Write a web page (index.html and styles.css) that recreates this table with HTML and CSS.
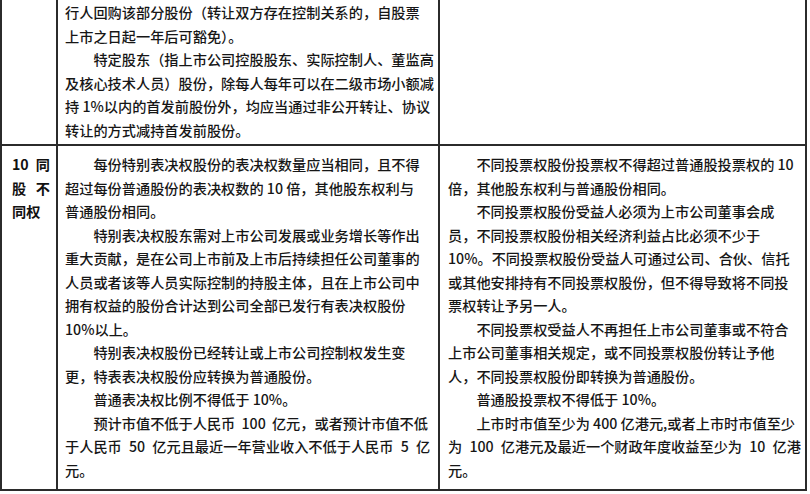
FILE: index.html
```html
<!DOCTYPE html>
<html lang="zh-CN">
<head>
<meta charset="utf-8">
<title>同股不同权</title>
<link rel="stylesheet" href="styles.css">
</head>
<body>
<div class="grid">
  <div class="cell head top"></div>
  <div class="cell text top">
    <p class="para cont">
      <span class="ln">行人回购该部分股份（转让双方存在控制关系的，自股票</span>
      <span class="ln">上市之日起一年后可豁免）。</span>
    </p>
    <p class="para">
      <span class="ln">特定股东（指上市公司控股股东、实际控制人、董监高</span>
      <span class="ln">及核心技术人员）股份，除每人每年可以在二级市场小额减</span>
      <span class="ln">持 1%以内的首发前股份外，均应当通过非公开转让、协议</span>
      <span class="ln">转让的方式减持首发前股份。</span>
    </p>
  </div>
  <div class="cell text right top"></div>

  <div class="cell head">
    <span class="hl">10 同</span>
    <span class="hl">股 不</span>
    <span class="hl last">同权</span>
  </div>
  <div class="cell text">
    <p class="para">
      <span class="ln">每份特别表决权股份的表决权数量应当相同，且不得</span>
      <span class="ln">超过每份普通股份的表决权数的 10 倍，其他股东权利与</span>
      <span class="ln">普通股份相同。</span>
    </p>
    <p class="para">
      <span class="ln">特别表决权股东需对上市公司发展或业务增长等作出</span>
      <span class="ln">重大贡献，是在公司上市前及上市后持续担任公司董事的</span>
      <span class="ln">人员或者该等人员实际控制的持股主体，且在上市公司中</span>
      <span class="ln">拥有权益的股份合计达到公司全部已发行有表决权股份</span>
      <span class="ln">10%以上。</span>
    </p>
    <p class="para">
      <span class="ln">特别表决权股份已经转让或上市公司控制权发生变</span>
      <span class="ln">更，特表表决权股份应转换为普通股份。</span>
    </p>
    <p class="para">
      <span class="ln">普通表决权比例不得低于 10%。</span>
    </p>
    <p class="para">
      <span class="ln ws-s">预计市值不低于人民币 100 亿元，或者预计市值不低</span>
      <span class="ln ws-m">于人民币 50 亿元且最近一年营业收入不低于人民币 5 亿</span>
      <span class="ln">元。</span>
    </p>
  </div>
  <div class="cell text right">
    <p class="para">
      <span class="ln">不同投票权股份投票权不得超过普通股投票权的 10</span>
      <span class="ln">倍，其他股东权利与普通股份相同。</span>
    </p>
    <p class="para">
      <span class="ln">不同投票权股份受益人必须为上市公司董事会成</span>
      <span class="ln">员，不同投票权股份相关经济利益占比必须不少于</span>
      <span class="ln">10%。不同投票权股份受益人可通过公司、合伙、信托</span>
      <span class="ln">或其他安排持有不同投票权股份，但不得导致将不同投</span>
      <span class="ln">票权转让予另一人。</span>
    </p>
    <p class="para">
      <span class="ln">不同投票权受益人不再担任上市公司董事或不符合</span>
      <span class="ln">上市公司董事相关规定，或不同投票权股份转让予他</span>
      <span class="ln">人，不同投票权股份即转换为普通股份。</span>
    </p>
    <p class="para">
      <span class="ln">普通股投票权不得低于 10%。</span>
    </p>
    <p class="para">
      <span class="ln">上市时市值至少为 400 亿港元,或者上市时市值至少</span>
      <span class="ln ws-m">为 100 亿港元及最近一个财政年度收益至少为 10 亿港</span>
      <span class="ln">元。</span>
    </p>
  </div>
</div>
</body>
</html>
```

FILE: styles.css
```css
html, body {
  margin: 0;
  padding: 0;
  background: #ffffff;
}

body {
  font-family: "Noto Sans CJK SC", "Noto Sans", sans-serif;
  font-size: 14.2px;
  font-weight: 500;
  line-height: 23.5px;
  color: #161616;
}

.grid {
  display: grid;
  grid-template-columns: 56px 382px 367px;
  width: 805px;
  border-left: 2px solid #2b2b2b;
}

.cell {
  border-right: 2px solid #2b2b2b;
  border-bottom: 2px solid #2b2b2b;
  padding: 7px 8px 7px 7px;
}

.cell.top {
  padding-top: 1px;
  padding-bottom: 2px;
}

.cell.head {
  padding-left: 10px;
  padding-right: 6px;
  font-weight: 700;
  color: #111111;
}

.cell.right {
  padding-left: 8px;
  padding-right: 7px;
}

.hl {
  display: block;
  width: 38px;
  text-align: justify;
  text-align-last: justify;
  white-space: nowrap;
}

.hl.last {
  text-align-last: left;
}

.para {
  margin: 0;
}

.ln {
  display: block;
  white-space: nowrap;
}

.para .ln:first-child {
  text-indent: 2em;
}

.para.cont .ln:first-child {
  text-indent: 0;
}

.ws-s {
  word-spacing: 3px;
}

.ws-m {
  word-spacing: 4px;
}
```
